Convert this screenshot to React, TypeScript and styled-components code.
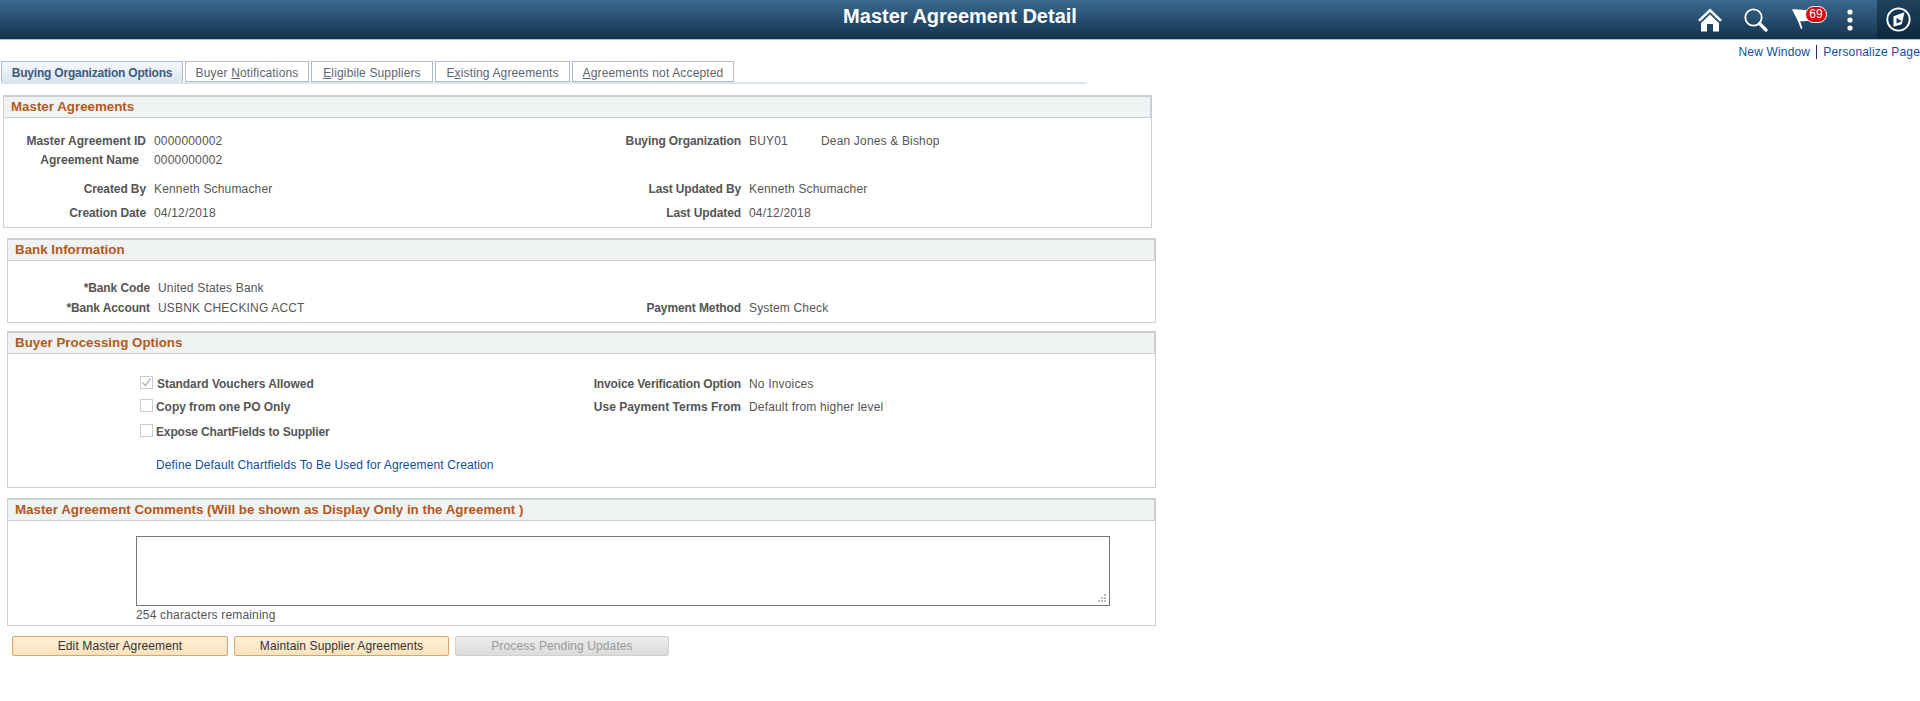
import React, { FC } from "react";
import styled, { createGlobalStyle } from "styled-components";

const GlobalStyle = createGlobalStyle`
  html, body {
    margin: 0;
    padding: 0;
    background: #fff;
    font-family: "Liberation Sans", Arial, sans-serif;
    font-size: 12px;
    color: #444;
  }
`;

const Page = styled.div`
  width: 1920px;
  height: 701px;
  overflow: hidden;
`;

const Banner = styled.header`
  height: 39px;
  border-bottom: 1px solid #a8c4de;
  background: linear-gradient(#3a6a8f, #14324c);
  display: grid;
  grid-template-columns: 1fr auto 1fr;
  align-items: center;
`;

const BannerTitle = styled.h1`
  margin: 0 0 6px;
  color: #fff;
  font-size: 20px;
  font-weight: bold;
`;

const BannerIcons = styled.div`
  display: flex;
  justify-content: flex-end;
  align-items: stretch;
  height: 39px;
`;

const IconSlot = styled.div<{ $width: number }>`
  width: ${(p) => p.$width}px;
  display: flex;
  align-items: center;
  position: relative;
`;

const CompassSlot = styled(IconSlot)`
  justify-content: center;
  background: rgba(10, 32, 52, 0.55);
  margin-left: 24px;
`;

const Badge = styled.span`
  position: absolute;
  left: 13px;
  top: 6px;
  width: 22px;
  height: 17px;
  border-radius: 9px;
  background: #d90a12;
  border: 1px solid #fff;
  color: #fff;
  font-size: 12px;
  line-height: 15px;
  text-align: center;
  box-sizing: border-box;
`;

const TopLinks = styled.div`
  height: 19px;
  padding-top: 2px;
  display: flex;
  justify-content: flex-end;
  align-items: center;
  gap: 6px;
`;

const TopLink = styled.a`
  color: #0e4f9e;
  font-size: 12px;
  letter-spacing: 0.17px;
`;

const LinkDivider = styled.span`
  width: 1px;
  height: 14px;
  background: #1b2f7a;
`;

const TabBar = styled.div`
  margin-left: 1px;
  width: 1086px;
  height: 23px;
  display: flex;
  gap: 2px;
  border-bottom: 2px solid #dbe5f0;
  box-sizing: border-box;
`;

const Tab = styled.div<{ $active?: boolean; $width: number }>`
  width: ${(p) => p.$width}px;
  height: 21px;
  box-sizing: border-box;
  border: 1px solid #b0bdcb;
  border-bottom: ${(p) => (p.$active ? "none" : "1px solid #b0bdcb")};
  background: ${(p) => (p.$active ? "linear-gradient(#f6f9fc, #d9e5f2)" : "#fff")};
  color: ${(p) => (p.$active ? "#3f5a7d" : "#5b6670")};
  font-weight: ${(p) => (p.$active ? "bold" : "normal")};
  letter-spacing: ${(p) => (p.$active ? "-0.2px" : "0.15px")};
  font-size: 12px;
  line-height: 22px;
  text-align: center;
  white-space: nowrap;
  u {
    text-underline-offset: 1px;
  }
`;

const Panel = styled.section<{ $left: number; $top: number; $height: number }>`
  margin: ${(p) => p.$top}px 0 0 ${(p) => p.$left}px;
  width: 1149px;
  height: ${(p) => p.$height}px;
  box-sizing: border-box;
  border: 1px solid #cbced3;
  display: flex;
  flex-direction: column;
`;

const PanelHeader = styled.h2`
  margin: 0;
  height: 22px;
  flex: none;
  box-sizing: border-box;
  border-top: 1px solid #cbced3;
  border-bottom: 1px solid #cbced3;
  border-right: 1px solid #cbced3;
  background: #eff3f4;
  color: #b3591c;
  font-size: 13.33px;
  font-weight: bold;
  line-height: 20px;
  padding-left: 7px;
`;

const PanelBody = styled.div<{ $top: number }>`
  padding-top: ${(p) => p.$top}px;
`;

const Row = styled.div<{ $label: number; $value: number; $gap?: number }>`
  display: grid;
  grid-template-columns: ${(p) => p.$label}px ${(p) => p.$value}px 180px 1fr;
  column-gap: 8px;
  height: 18px;
  align-items: center;
  margin-top: ${(p) => p.$gap ?? 0}px;
  white-space: nowrap;
`;

const Label = styled.span<{ $inset?: number; $track?: number }>`
  font-weight: bold;
  color: #555;
  text-align: right;
  letter-spacing: ${(p) => p.$track ?? -0.1}px;
  padding-right: ${(p) => p.$inset ?? 0}px;
`;

const Value = styled.span`
  color: #555;
  display: flex;
  letter-spacing: 0.17px;
`;

const Code = styled.span`
  width: 72px;
`;

const CheckField = styled.label<{ $checked?: boolean; $track?: number }>`
  display: flex;
  align-items: center;
  gap: ${(p) => (p.$checked ? 4 : 3)}px;
  font-weight: bold;
  color: #555;
  letter-spacing: ${(p) => p.$track ?? -0.05}px;
`;

const CheckBox = styled.span`
  width: 11px;
  height: 11px;
  margin-top: -3px;
  border: 1px solid #ccc;
  background: #fff;
  display: flex;
`;

const AgreementLink = styled.a`
  color: #0e4f9e;
  padding-left: 16px;
  letter-spacing: 0.14px;
`;

const CommentArea = styled.div`
  margin: 15px 0 0 128px;
  width: 974px;
  height: 70px;
  box-sizing: border-box;
  border: 1px solid #777;
  position: relative;
`;

const Grip = styled.svg`
  position: absolute;
  right: 2px;
  bottom: 2px;
`;

const Remaining = styled.div`
  margin: 2px 0 0 128px;
  color: #555;
  line-height: 15px;
  letter-spacing: 0.17px;
`;

const ButtonRow = styled.div`
  margin: 10px 0 0 12px;
  display: flex;
  gap: 6px;
`;

const ActionButton = styled.button<{ $off?: boolean; $width: number }>`
  width: ${(p) => p.$width}px;
  height: 20px;
  padding: 0;
  border-radius: 2px;
  border: 1px solid ${(p) => (p.$off ? "#d0d0d0" : "#dba36c")};
  background: ${(p) =>
    p.$off ? "linear-gradient(#ececec, #dcdcdc)" : "linear-gradient(#fdf0d8, #fbe2bb)"};
  color: ${(p) => (p.$off ? "#999" : "#333")};
  font-family: "Liberation Sans", Arial, sans-serif;
  font-size: 12px;
  letter-spacing: 0.12px;
`;

const HomeIcon = () => (
  <svg width="24" height="24" viewBox="0 0 24 24" fill="#fff">
    <path d="M12 0.5 L24 12 L22 13.5 L12 4 L2 13.5 L0 12 Z" />
    <path d="M12 6.5 L21 15 L21 23.5 L15 23.5 L15 16 L9 16 L9 23.5 L3 23.5 L3 15 Z" />
  </svg>
);

const SearchIcon = () => (
  <svg width="24" height="24" viewBox="0 0 24 24" fill="none" stroke="#fff">
    <circle cx="9.5" cy="9.5" r="8.2" strokeWidth="1.8" />
    <path d="M15.5 15.5 L22 22" strokeWidth="3.2" strokeLinecap="round" />
  </svg>
);

const FlagIcon = () => (
  <svg width="20" height="24" viewBox="0 0 20 24" fill="#fff">
    <path d="M0 1.5 C6 0.5 12 3 19 2 L19 12 C14 14 10 12.5 6.5 14 Z" />
    <path d="M4 8 L6.5 8 L10.5 20.5 L9 21 Z" />
  </svg>
);

const KebabIcon = () => (
  <svg width="6" height="24" viewBox="0 0 6 24" fill="#fff">
    <circle cx="3" cy="4" r="2.6" />
    <circle cx="3" cy="12" r="2.6" />
    <circle cx="3" cy="20" r="2.6" />
  </svg>
);

const CompassIcon = () => (
  <svg width="25" height="25" viewBox="0 0 25 25">
    <circle cx="12.5" cy="12.5" r="11.2" fill="none" stroke="#fff" strokeWidth="1.8" />
    <path fill="#fff" d="M18.5 5.2 L7.5 9.2 L7.5 19.8 L15.8 17.2 Z" />
    <path fill="#1d3f5c" d="M10.5 10.8 L15.8 14.2 L10.5 16.5 Z" />
  </svg>
);

const checkMark = (
  <svg width="11" height="11" viewBox="0 0 11 11" fill="none">
    <path d="M1.5 5.5 L4.5 8.5 L9.5 1.5" stroke="#bbb" strokeWidth="1.6" />
  </svg>
);

type CheckProps = { text: string; checked?: boolean; track?: number };

const Check: FC<CheckProps> = ({ text, checked, track }) => (
  <CheckField $checked={checked} $track={track}>
    <CheckBox>{checked && checkMark}</CheckBox>
    {text}
  </CheckField>
);

const App: FC = () => {
  return (
    <Page>
      <GlobalStyle />
      <Banner>
        <span />
        <BannerTitle>Master Agreement Detail</BannerTitle>
        <BannerIcons>
          <IconSlot $width={46}><HomeIcon /></IconSlot>
          <IconSlot $width={48}><SearchIcon /></IconSlot>
          <IconSlot $width={55}>
            <FlagIcon />
            <Badge>69</Badge>
          </IconSlot>
          <IconSlot $width={6}><KebabIcon /></IconSlot>
          <CompassSlot $width={43}><CompassIcon /></CompassSlot>
        </BannerIcons>
      </Banner>

      <TopLinks>
        <TopLink>New Window</TopLink>
        <LinkDivider />
        <TopLink>Personalize Page</TopLink>
      </TopLinks>

      <TabBar>
        <Tab $active $width={182}>Buying Organization Options</Tab>
        <Tab $width={124}>Buyer <u>N</u>otifications</Tab>
        <Tab $width={122}><u>E</u>ligibile Suppliers</Tab>
        <Tab $width={135}>E<u>x</u>isting Agreements</Tab>
        <Tab $width={162}><u>A</u>greements not Accepted</Tab>
      </TabBar>

      <Panel $left={3} $top={11} $height={133}>
        <PanelHeader>Master Agreements</PanelHeader>
        <PanelBody $top={14}>
          <Row $label={142} $value={399}>
            <Label $track={0}>Master Agreement ID</Label>
            <Value>0000000002</Value>
            <Label>Buying Organization</Label>
            <Value><Code>BUY01</Code>Dean Jones &amp; Bishop</Value>
          </Row>
          <Row $label={142} $value={399} $gap={1}>
            <Label $inset={7} $track={0}>Agreement Name</Label>
            <Value>0000000002</Value>
          </Row>
          <Row $label={142} $value={399} $gap={11}>
            <Label>Created By</Label>
            <Value>Kenneth Schumacher</Value>
            <Label $track={-0.15}>Last Updated By</Label>
            <Value>Kenneth Schumacher</Value>
          </Row>
          <Row $label={142} $value={399} $gap={6}>
            <Label>Creation Date</Label>
            <Value>04/12/2018</Value>
            <Label>Last Updated</Label>
            <Value>04/12/2018</Value>
          </Row>
        </PanelBody>
      </Panel>

      <Panel $left={7} $top={10} $height={85}>
        <PanelHeader>Bank Information</PanelHeader>
        <PanelBody $top={18}>
          <Row $label={142} $value={395}>
            <Label>*Bank Code</Label>
            <Value>United States Bank</Value>
          </Row>
          <Row $label={142} $value={395} $gap={2}>
            <Label>*Bank Account</Label>
            <Value>USBNK CHECKING ACCT</Value>
            <Label>Payment Method</Label>
            <Value>System Check</Value>
          </Row>
        </PanelBody>
      </Panel>

      <Panel $left={7} $top={8} $height={157}>
        <PanelHeader>Buyer Processing Options</PanelHeader>
        <PanelBody $top={21}>
          <Row $label={124} $value={413}>
            <span />
            <Check text="Standard Vouchers Allowed" checked />
            <Label $track={-0.15}>Invoice Verification Option</Label>
            <Value>No Invoices</Value>
          </Row>
          <Row $label={124} $value={413} $gap={5}>
            <span />
            <Check text="Copy from one PO Only" />
            <Label $track={0}>Use Payment Terms From</Label>
            <Value>Default from higher level</Value>
          </Row>
          <Row $label={124} $value={413} $gap={7}>
            <span />
            <Check text="Expose ChartFields to Supplier" track={-0.15} />
          </Row>
          <Row $label={124} $value={413} $gap={15}>
            <span />
            <AgreementLink>Define Default Chartfields To Be Used for Agreement Creation</AgreementLink>
          </Row>
        </PanelBody>
      </Panel>

      <Panel $left={7} $top={10} $height={128}>
        <PanelHeader>Master Agreement Comments (Will be shown as Display Only in the Agreement )</PanelHeader>
        <CommentArea>
          <Grip width="9" height="9" viewBox="0 0 9 9" fill="#bbb">
            <rect x="6" y="0" width="2" height="2" />
            <rect x="3" y="3" width="2" height="2" />
            <rect x="6" y="3" width="2" height="2" />
            <rect x="0" y="6" width="2" height="2" />
            <rect x="3" y="6" width="2" height="2" />
            <rect x="6" y="6" width="2" height="2" />
          </Grip>
        </CommentArea>
        <Remaining>254 characters remaining</Remaining>
      </Panel>

      <ButtonRow>
        <ActionButton $width={216}>Edit Master Agreement</ActionButton>
        <ActionButton $width={215}>Maintain Supplier Agreements</ActionButton>
        <ActionButton $off $width={214}>Process Pending Updates</ActionButton>
      </ButtonRow>
    </Page>
  );
};

export default App;
